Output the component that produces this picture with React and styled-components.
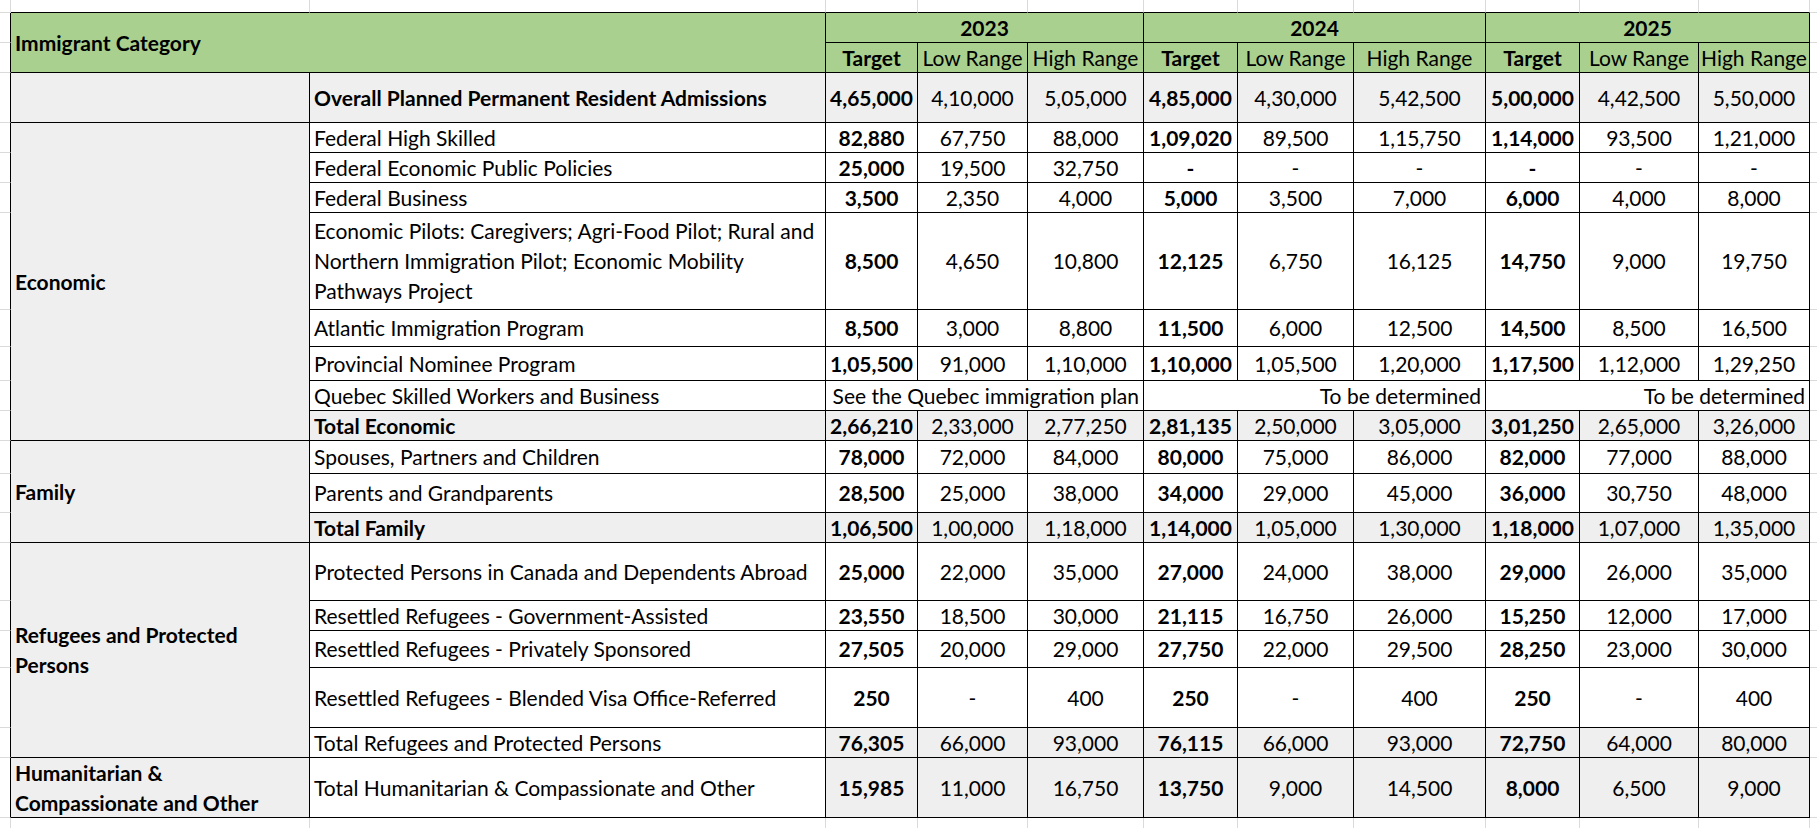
import React from "react";
import styled, { createGlobalStyle } from "styled-components";

const GRID = "#dadada";
const LINE = "#000";
const GREEN = "#a9d08e";
const SHADE = "#efefef";

// sheet column widths (px), last column takes the rest
const COLS = [11, 299, 516, 92, 110, 116, 94, 116, 132, 94, 119, 111];

const GlobalStyle = createGlobalStyle`
  *, *::before, *::after { box-sizing: border-box; }
  html, body { margin: 0; padding: 0; background: #fff; }
  body {
    font-family: "Lato", "Open Sans", sans-serif;
    color: #000;
    overflow: hidden;
  }
`;

const Sheet = styled.div`
  display: grid;
  width: 100%;
  height: 828px;
  grid-template-columns: ${COLS.map((c) => c + "px").join(" ")} 1fr;
  grid-template-rows: ${(p) => p.$rows};
  overflow: hidden;
`;

const Gutter = styled.div`
  border-right: ${(p) =>
    p.$noRight ? "none" : `1px solid ${p.$darkRight ? LINE : GRID}`};
  border-bottom: ${(p) =>
    p.$noBottom ? "none" : `1px solid ${p.$darkBottom ? LINE : GRID}`};
`;

const Cell = styled.div`
  display: flex;
  align-items: center;
  justify-content: ${(p) =>
    p.$align === "left"
      ? "flex-start"
      : p.$align === "right"
      ? "flex-end"
      : "center"};
  text-align: ${(p) => p.$align || "center"};
  grid-column: span ${(p) => p.$cols || 1};
  grid-row: span ${(p) => p.$span || 1};
  padding: 0 4px;
  border-right: 1px solid ${LINE};
  border-bottom: 1px solid ${LINE};
  background: ${(p) => p.$bg || "#fff"};
  font-size: 21px;
  line-height: 30px;
  font-weight: ${(p) => (p.$bold ? 700 : 400)};
  white-space: pre;
  min-width: 0;
`;

const YEARS = ["2023", "2024", "2025"];

const sections = [
  {
    name: "",
    rows: [
      {
        label: "Overall Planned Permanent Resident Admissions",
        h: 50,
        bold: true,
        labelShade: true,
        valShade: true,
        vals: ["4,65,000", "4,10,000", "5,05,000", "4,85,000", "4,30,000", "5,42,500", "5,00,000", "4,42,500", "5,50,000"],
      },
    ],
  },
  {
    name: "Economic",
    rows: [
      { label: "Federal High Skilled", h: 30, vals: ["82,880", "67,750", "88,000", "1,09,020", "89,500", "1,15,750", "1,14,000", "93,500", "1,21,000"] },
      { label: "Federal Economic Public Policies", h: 30, vals: ["25,000", "19,500", "32,750", "-", "-", "-", "-", "-", "-"] },
      { label: "Federal Business", h: 30, vals: ["3,500", "2,350", "4,000", "5,000", "3,500", "7,000", "6,000", "4,000", "8,000"] },
      {
        label: "Economic Pilots: Caregivers; Agri-Food Pilot; Rural and\nNorthern Immigration Pilot; Economic Mobility\nPathways Project",
        h: 97,
        vals: ["8,500", "4,650", "10,800", "12,125", "6,750", "16,125", "14,750", "9,000", "19,750"],
      },
      { label: "Atlantic Immigration Program", h: 37, vals: ["8,500", "3,000", "8,800", "11,500", "6,000", "12,500", "14,500", "8,500", "16,500"] },
      { label: "Provincial Nominee Program", h: 34, vals: ["1,05,500", "91,000", "1,10,000", "1,10,000", "1,05,500", "1,20,000", "1,17,500", "1,12,000", "1,29,250"] },
      { label: "Quebec Skilled Workers and Business", h: 30, notes: ["See the Quebec immigration plan", "To be determined", "To be determined"] },
      {
        label: "Total Economic",
        h: 30,
        bold: true,
        labelShade: true,
        valShade: true,
        vals: ["2,66,210", "2,33,000", "2,77,250", "2,81,135", "2,50,000", "3,05,000", "3,01,250", "2,65,000", "3,26,000"],
      },
    ],
  },
  {
    name: "Family",
    rows: [
      { label: "Spouses, Partners and Children", h: 33, vals: ["78,000", "72,000", "84,000", "80,000", "75,000", "86,000", "82,000", "77,000", "88,000"] },
      { label: "Parents and Grandparents", h: 39, vals: ["28,500", "25,000", "38,000", "34,000", "29,000", "45,000", "36,000", "30,750", "48,000"] },
      {
        label: "Total Family",
        h: 30,
        bold: true,
        labelShade: true,
        valShade: true,
        vals: ["1,06,500", "1,00,000", "1,18,000", "1,14,000", "1,05,000", "1,30,000", "1,18,000", "1,07,000", "1,35,000"],
      },
    ],
  },
  {
    name: "Refugees and Protected\nPersons",
    rows: [
      { label: "Protected Persons in Canada and Dependents Abroad", h: 58, vals: ["25,000", "22,000", "35,000", "27,000", "24,000", "38,000", "29,000", "26,000", "35,000"] },
      { label: "Resettled Refugees - Government-Assisted", h: 30, vals: ["23,550", "18,500", "30,000", "21,115", "16,750", "26,000", "15,250", "12,000", "17,000"] },
      { label: "Resettled Refugees - Privately Sponsored", h: 37, vals: ["27,505", "20,000", "29,000", "27,750", "22,000", "29,500", "28,250", "23,000", "30,000"] },
      { label: "Resettled Refugees - Blended Visa Office-Referred", h: 60, vals: ["250", "-", "400", "250", "-", "400", "250", "-", "400"] },
      {
        label: "Total Refugees and Protected Persons",
        h: 30,
        valShade: true,
        vals: ["76,305", "66,000", "93,000", "76,115", "66,000", "93,000", "72,750", "64,000", "80,000"],
      },
    ],
  },
  {
    name: "Humanitarian &\nCompassionate and Other",
    rows: [
      {
        label: "Total Humanitarian & Compassionate and Other",
        h: 60,
        valShade: true,
        vals: ["15,985", "11,000", "16,750", "13,750", "9,000", "14,500", "8,000", "6,500", "9,000"],
      },
    ],
  },
];

const TopGutter = () => (
  <>
    <Gutter />
    {COLS.slice(1).map((_, i) => (
      <Gutter key={i} $darkBottom />
    ))}
    <Gutter $noRight />
  </>
);

const BottomGutter = () => (
  <>
    {COLS.map((_, i) => (
      <Gutter key={i} $noBottom />
    ))}
    <Gutter $noRight $noBottom />
  </>
);

const HeaderRows = () => (
  <>
    <Gutter $darkRight />
    <Cell $cols={2} $span={2} $align="left" $bg={GREEN} $bold>
      Immigrant Category
    </Cell>
    {YEARS.map((y) => (
      <Cell key={y} $cols={3} $bg={GREEN} $bold>
        {y}
      </Cell>
    ))}
    <Gutter $noRight />
    <Gutter $darkRight />
    {YEARS.map((y) => (
      <React.Fragment key={y}>
        <Cell $bg={GREEN} $bold>
          Target
        </Cell>
        <Cell $bg={GREEN}>Low Range</Cell>
        <Cell $bg={GREEN}>High Range</Cell>
      </React.Fragment>
    ))}
    <Gutter $noRight />
  </>
);

const DataRow = ({ row, section, first }) => {
  const valBg = row.valShade ? SHADE : "#fff";
  return (
    <>
      <Gutter $darkRight />
      {first && (
        <Cell $span={section.rows.length} $align="left" $bg={SHADE} $bold>
          {section.name}
        </Cell>
      )}
      <Cell $align="left" $bold={row.bold} $bg={row.labelShade ? SHADE : "#fff"}>
        {row.label}
      </Cell>
      {row.notes
        ? row.notes.map((n, i) => (
            <Cell key={i} $cols={3} $align="right">
              {n}
            </Cell>
          ))
        : row.vals.map((v, i) => (
            <Cell key={i} $bold={i % 3 === 0} $bg={valBg}>
              {v}
            </Cell>
          ))}
      <Gutter $noRight />
    </>
  );
};

export default function App() {
  const heights = [13, 30, 30];
  sections.forEach((s) => s.rows.forEach((r) => heights.push(r.h)));
  const template = heights.map((h) => h + "px").join(" ") + " 1fr";

  return (
    <>
      <GlobalStyle />
      <Sheet $rows={template}>
        <TopGutter />
        <HeaderRows />
        {sections.map((s, si) =>
          s.rows.map((r, ri) => (
            <DataRow key={si + "-" + ri} row={r} section={s} first={ri === 0} />
          ))
        )}
        <BottomGutter />
      </Sheet>
    </>
  );
}
